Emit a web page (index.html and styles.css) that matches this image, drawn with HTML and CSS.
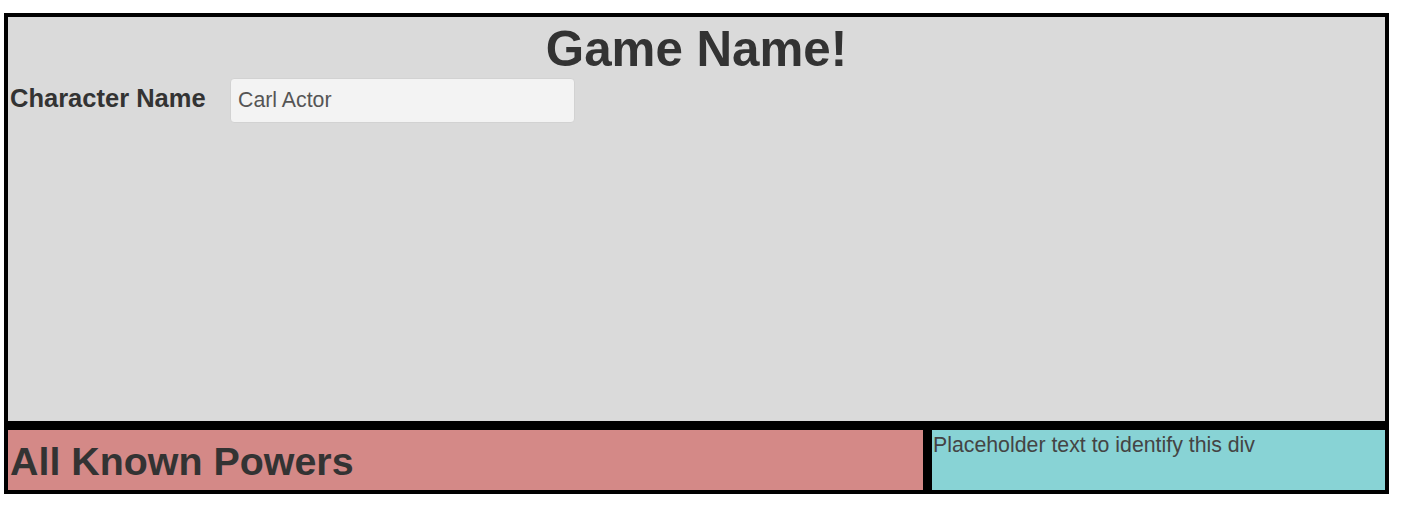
FILE: index.html
```html
<!DOCTYPE html>
<html lang="en">
<head>
<meta charset="utf-8">
<title>Game Name!</title>
<link rel="stylesheet" href="styles.css">
</head>
<body>
<div class="frame">
  <section class="main">
    <h1 class="title">Game Name!</h1>
    <div class="field-row">
      <label class="field-label" for="charname">Character Name</label>
      <input class="field-input" id="charname" type="text" value="Carl Actor">
    </div>
  </section>
  <section class="powers">
    <h2 class="powers-title">All Known Powers</h2>
  </section>
  <section class="side">Placeholder text to identify this div</section>
</div>
</body>
</html>
```

FILE: styles.css
```css
html, body {
  margin: 0;
  padding: 0;
  background: #ffffff;
}

body {
  font-family: "Liberation Sans", Arial, Helvetica, sans-serif;
  color: #333333;
}

.frame {
  margin: 13px 16px 0 4px;
  background: #000000;
  padding: 4px;
  display: grid;
  grid-template-columns: 915px 1fr;
  grid-template-rows: 404px 60px;
  gap: 9px;
}

.main {
  grid-column: 1 / 3;
  background: #dadada;
  padding: 0 2px;
}

.title {
  margin: 4px 0 0;
  text-align: center;
  font-size: 49.3px;
  line-height: 56px;
  font-weight: bold;
  color: #333333;
}

.field-row {
  display: flex;
  align-items: flex-start;
}

.field-label {
  margin-top: 7px;
  font-size: 25.5px;
  line-height: 29px;
  font-weight: bold;
  color: #333333;
  width: 220px;
}

.field-input {
  margin-top: 1px;
  width: 345px;
  height: 45px;
  box-sizing: border-box;
  background: #f3f3f3;
  border: 1px solid #d2d2d2;
  border-radius: 4px;
  padding: 0 7px;
  font-family: "Liberation Sans", Arial, Helvetica, sans-serif;
  font-size: 21.3px;
  color: #555555;
  outline: none;
}

.powers {
  background: #d48987;
  padding: 0 2px;
}

.powers-title {
  margin: 9px 0 0;
  font-size: 39.4px;
  line-height: 44px;
  font-weight: bold;
  color: #333333;
}

.side {
  background: #88d3d5;
  padding: 3px 1px 0;
  font-size: 21.3px;
  line-height: 24px;
  color: #444444;
}
```
